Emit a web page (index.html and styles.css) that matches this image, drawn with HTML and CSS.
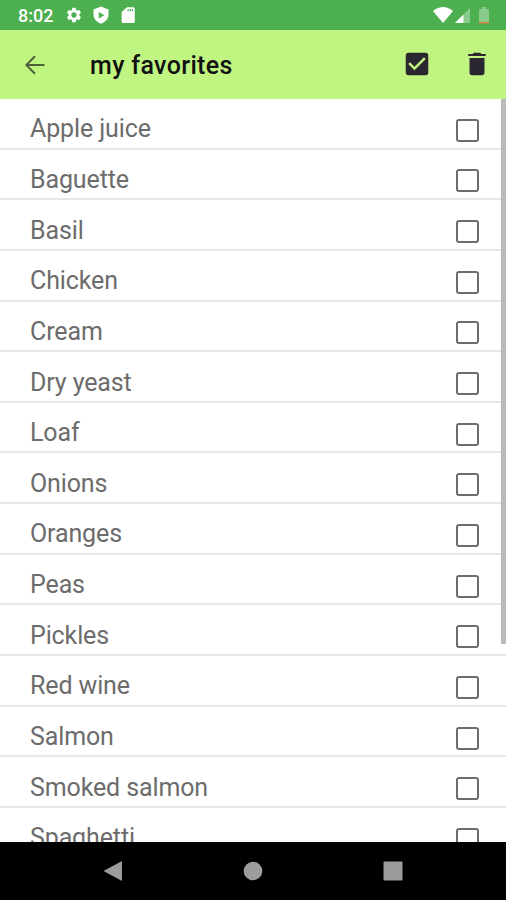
FILE: index.html
```html
<!DOCTYPE html>
<html lang="en">
<head>
  <meta charset="UTF-8">
  <meta name="viewport" content="width=device-width, initial-scale=1.0">
  <title>my favorites</title>
  <link rel="stylesheet" href="styles.css">
</head>
<body>

<div class="status-bar">
  <span class="clock">8:02</span>
  <svg class="status-icon gear" viewBox="0 0 24 24"><path d="M19.14 12.94c.04-.3.06-.61.06-.94 0-.32-.02-.64-.07-.94l2.03-1.58c.18-.14.23-.41.12-.61l-1.92-3.32c-.12-.22-.37-.29-.59-.22l-2.39.96c-.5-.38-1.03-.7-1.62-.94L14.4 2.81c-.04-.24-.24-.41-.48-.41h-3.84c-.24 0-.43.17-.47.41L9.25 5.35c-.59.24-1.13.57-1.62.94l-2.39-.96c-.22-.08-.47 0-.59.22L2.74 8.87c-.12.21-.08.47.12.61l2.03 1.58c-.05.3-.09.63-.09.94s.02.64.07.94l-2.03 1.58c-.18.14-.23.41-.12.61l1.92 3.32c.12.22.37.29.59.22l2.39-.96c.5.38 1.03.7 1.62.94l.36 2.54c.05.24.24.41.48.41h3.84c.24 0 .44-.17.47-.41l.36-2.54c.59-.24 1.13-.56 1.62-.94l2.39.96c.22.08.47 0 .59-.22l1.92-3.32c.12-.22.07-.47-.12-.61l-2.01-1.58zM12 15.600c-1.980 0-3.600-1.620-3.600-3.600s1.620-3.600 3.600-3.600 3.600 1.620 3.600 3.600-1.620 3.600-3.600 3.600z"/></svg>
  <svg class="status-icon shield" viewBox="0 0 24 24"><path fill-rule="evenodd" d="M12 .5L2 4.500v7c0 5.600 4.500 10 10 12 5.500-2 10-6.400 10-12v-7zM9 8l7.500 4.200L9 16.500z"/></svg>
  <svg class="status-icon card" viewBox="0 0 24 24"><path d="M19 1.500h-8.500L3.500 8v12.500c0 1.100.9 2 2 2H19c1.100 0 2-.9 2-2v-17c0-1.100-.9-2-2-2zM13 7h-1.600V4H13v3zm2.800 0h-1.600V4h1.600v3zm2.800 0H17V4h1.600v3z"/></svg>
  <svg class="wifi" viewBox="0 0 20 16"><path d="M0 4Q10-4 20 4L10 16z"/></svg>
  <svg class="signal" viewBox="0 0 16 16"><path class="faded" d="M16 0v16H0z"/><path d="M9 7v9H0z"/></svg>
  <svg class="battery" viewBox="0 0 10 17"><path class="faded" d="M3 0h4v2h3v13H0V2h3z"/><path class="low" d="M0 15h10v1.500H0z"/></svg>
</div>

<header class="toolbar">
  <svg class="back" viewBox="0 0 20 20"><path d="M19.500 10H1.500M10 1.300L1.300 10l8.700 8.700"/></svg>
  <h1>my favorites</h1>
  <svg class="action select-all" viewBox="0 0 24 24"><path d="M19 3H5c-1.110 0-2 .9-2 2v14c0 1.100.89 2 2 2h14c1.110 0 2-.9 2-2V5c0-1.100-.89-2-2-2zm-9 14l-5-5 1.410-1.410L10 14.170l7.590-7.590L19 8l-9 9z"/></svg>
  <svg class="action delete" viewBox="0 0 24 24"><path d="M6 19c0 1.100.9 2 2 2h8c1.100 0 2-.9 2-2V7.200H6V19zM19 4h-3.500l-1-1h-5l-1 1H5v1.600h14V4z"/></svg>
</header>

<main class="list">
  <label class="item">Apple juice<input type="checkbox"></label>
  <label class="item">Baguette<input type="checkbox"></label>
  <label class="item">Basil<input type="checkbox"></label>
  <label class="item">Chicken<input type="checkbox"></label>
  <label class="item">Cream<input type="checkbox"></label>
  <label class="item">Dry yeast<input type="checkbox"></label>
  <label class="item">Loaf<input type="checkbox"></label>
  <label class="item">Onions<input type="checkbox"></label>
  <label class="item">Oranges<input type="checkbox"></label>
  <label class="item">Peas<input type="checkbox"></label>
  <label class="item">Pickles<input type="checkbox"></label>
  <label class="item">Red wine<input type="checkbox"></label>
  <label class="item">Salmon<input type="checkbox"></label>
  <label class="item">Smoked salmon<input type="checkbox"></label>
  <label class="item">Spaghetti<input type="checkbox"></label>
  <div class="scrollbar"></div>
</main>

<nav class="nav-bar">
  <svg viewBox="0 0 20 22"><path d="M19 1v20L.5 11z"/></svg>
  <svg viewBox="0 0 20 22"><circle cx="10" cy="11" r="9.300"/></svg>
  <svg viewBox="0 0 20 22"><rect x=".5" y="1.500" width="19" height="19" rx="1"/></svg>
</nav>

</body>
</html>
```
FILE: styles.css
```css
body {
  margin: 0;
  height: 900px;
  display: flex;
  flex-direction: column;
  overflow: hidden;
  background: #fff;
  font-family: Roboto, sans-serif;
}

svg {
  display: block;
  flex: none;
}

.status-bar {
  display: flex;
  align-items: center;
  flex: none;
  box-sizing: border-box;
  height: 30px;
  padding: 0 17px 0 18px;
  background: #4caf50;
  color: #fff;
  fill: #fff;
}

.clock {
  width: 47px;
  padding-top: 1px;
  font-size: 18px;
  font-weight: 500;
}

.status-icon {
  width: 18px;
  height: 18px;
}

.shield {
  margin-left: 9px;
}

.card {
  margin-left: 9px;
}

.wifi {
  width: 20px;
  height: 16px;
  margin-left: auto;
}

.signal {
  width: 15px;
  height: 15px;
  margin-left: 2px;
}

.battery {
  width: 10px;
  height: 17px;
  margin-left: 9px;
}

.faded {
  fill: rgba(255, 255, 255, 0.35);
}

.low {
  fill: #e0804a;
}

.toolbar {
  display: flex;
  align-items: center;
  flex: none;
  height: 69px;
  padding: 0 14px 0 25px;
  background: #c0f582;
}

.toolbar h1 {
  flex: 1;
  margin: 2px 0 0 45px;
  font-size: 25px;
  font-weight: 500;
  letter-spacing: 0.35px;
  color: #111;
}

.back {
  width: 20px;
  height: 20px;
  fill: none;
  stroke: #4c6135;
  stroke-width: 2;
}

.action {
  width: 30px;
  height: 30px;
  margin-bottom: 2px;
  fill: #2b2730;
}

.delete {
  margin-left: 30px;
}

.list {
  position: relative;
  flex: 1;
  min-height: 0;
  overflow: hidden;
}

.item {
  display: flex;
  align-items: center;
  justify-content: space-between;
  box-sizing: border-box;
  height: 50.65px;
  padding: 11px 27px 0 30px;
  border-bottom: 2px solid #e7e7e7;
  font-size: 25px;
  letter-spacing: -0.12px;
  color: #6c6c6c;
}

.item input {
  appearance: none;
  box-sizing: border-box;
  width: 23px;
  height: 23px;
  margin: 3px 0 0;
  border: 2px solid #6c6c6c;
  border-radius: 3px;
}

/* overlays the right edge of the list */
.scrollbar {
  position: absolute;
  top: 0;
  right: 0;
  width: 5px;
  height: 545px;
  background: #bababa;
}

.nav-bar {
  display: flex;
  align-items: center;
  justify-content: center;
  gap: 120px;
  flex: none;
  height: 58px;
  background: #000;
}

.nav-bar svg {
  width: 20px;
  height: 22px;
  fill: #9c9c9c;
}
```
